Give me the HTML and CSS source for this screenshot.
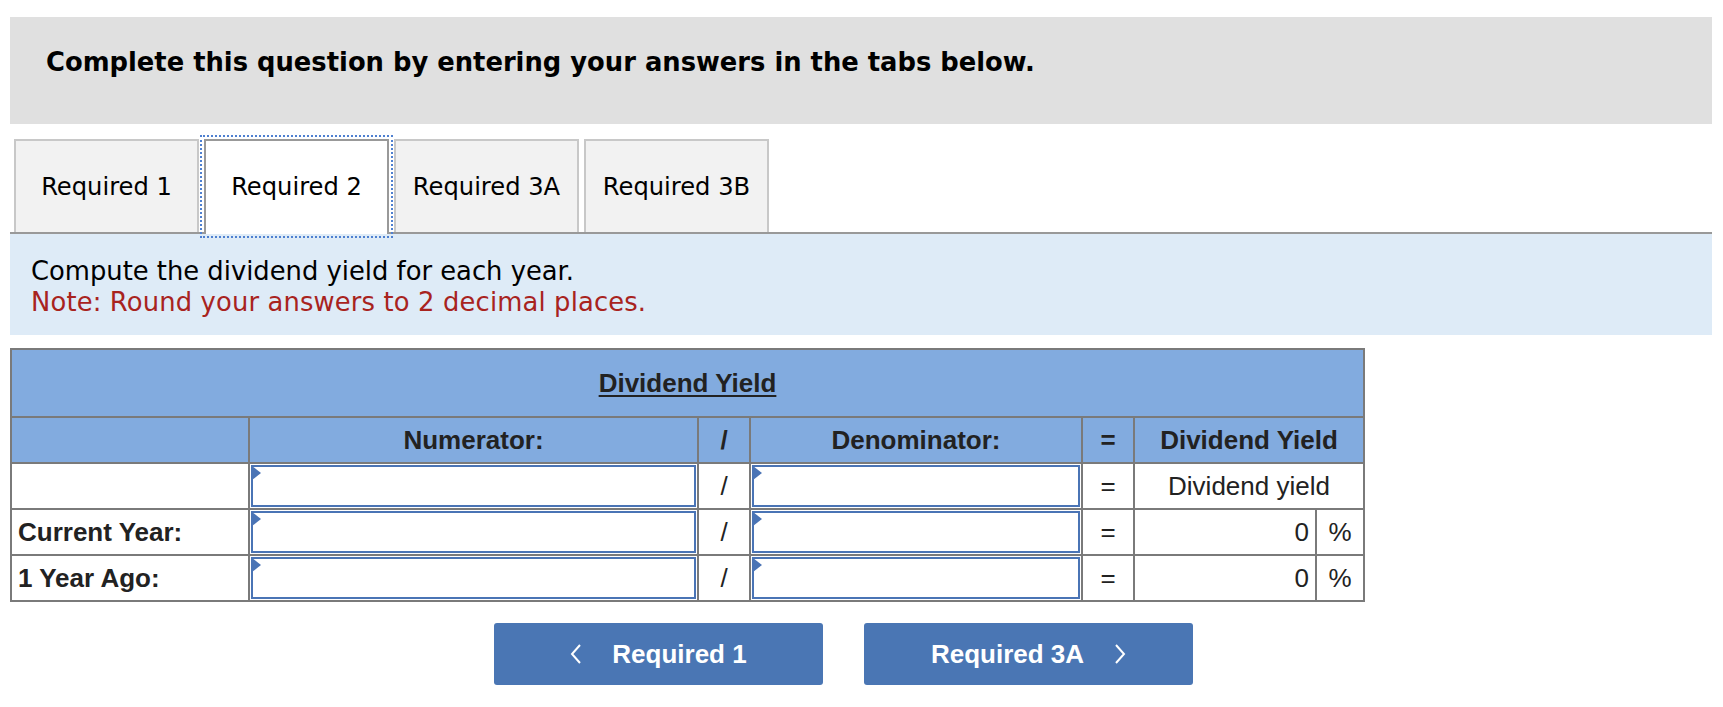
FILE: index.html
```html
<!DOCTYPE html>
<html lang="en">
<head>
<meta charset="utf-8">
<title>Dividend Yield</title>
<link rel="stylesheet" href="styles.css">
</head>
<body>
<div class="page">
  <div class="banner">Complete this question by entering your answers in the tabs below.</div>

  <div class="tabs">
    <div class="tab">Required 1</div>
    <div class="tab active">Required 2</div>
    <div class="tab">Required 3A</div>
    <div class="tab">Required 3B</div>
  </div>

  <div class="info">
    <div class="info-line">Compute the dividend yield for each year.</div>
    <div class="info-line note">Note: Round your answers to 2 decimal places.</div>
  </div>

  <table class="grid">
    <colgroup>
      <col class="c-label">
      <col class="c-num">
      <col class="c-op">
      <col class="c-den">
      <col class="c-op">
      <col class="c-val">
      <col class="c-pct">
    </colgroup>
    <tr class="head1">
      <th colspan="7"><span class="title">Dividend Yield</span></th>
    </tr>
    <tr class="head2">
      <th></th>
      <th>Numerator:</th>
      <th>/</th>
      <th>Denominator:</th>
      <th>=</th>
      <th colspan="2">Dividend Yield</th>
    </tr>
    <tr class="row">
      <td class="label"></td>
      <td class="inp"><div class="box"><span class="tri"></span></div></td>
      <td class="op">/</td>
      <td class="inp"><div class="box"><span class="tri"></span></div></td>
      <td class="op">=</td>
      <td colspan="2" class="center">Dividend yield</td>
    </tr>
    <tr class="row">
      <td class="label">Current Year:</td>
      <td class="inp"><div class="box"><span class="tri"></span></div></td>
      <td class="op">/</td>
      <td class="inp"><div class="box"><span class="tri"></span></div></td>
      <td class="op">=</td>
      <td class="val">0</td>
      <td class="pct">%</td>
    </tr>
    <tr class="row">
      <td class="label">1 Year Ago:</td>
      <td class="inp"><div class="box"><span class="tri"></span></div></td>
      <td class="op">/</td>
      <td class="inp"><div class="box"><span class="tri"></span></div></td>
      <td class="op">=</td>
      <td class="val">0</td>
      <td class="pct">%</td>
    </tr>
  </table>

  <div class="nav">
    <button class="btn prev">
      <svg class="chev" width="12" height="24" viewBox="0 0 12 24"><polyline points="10,3 2,12 10,21" fill="none" stroke="#fff" stroke-width="2"/></svg>
      <span>Required 1</span>
    </button>
    <button class="btn next">
      <span>Required 3A</span>
      <svg class="chev" width="12" height="24" viewBox="0 0 12 24"><polyline points="2,3 10,12 2,21" fill="none" stroke="#fff" stroke-width="2"/></svg>
    </button>
  </div>
</div>
</body>
</html>
```

FILE: styles.css
```css
html, body {
  margin: 0;
  padding: 0;
  background: #fff;
}
.page {
  padding: 17px 11px 0 10px;
}
.banner {
  background: #e0e0e0;
  height: 107px;
  box-sizing: border-box;
  padding: 30px 0 0 36px;
  font-family: "DejaVu Sans", Verdana, sans-serif;
  font-weight: bold;
  font-size: 25.8px;
  line-height: 31px;
  color: #000;
}
.tabs {
  display: flex;
  gap: 5px;
  padding: 15px 0 0 4px;
  border-bottom: 2px solid #999;
  height: 93px;
}
.tab {
  width: 185px;
  box-sizing: border-box;
  background: #f2f2f2;
  border: 2px solid #c8c8c8;
  border-bottom: none;
  display: flex;
  align-items: center;
  justify-content: center;
  font-family: "DejaVu Sans", Verdana, sans-serif;
  font-size: 24.2px;
  color: #000;
}
.tab.active {
  background: #fff;
  border-color: #999;
  margin-bottom: -2px;
  padding-bottom: 2px;
  outline: 2px dotted #4f80d0;
  outline-offset: 2px;
  position: relative;
}
.info {
  background: #deebf7;
  padding: 22px 0 17px 21px;
  font-family: "DejaVu Sans", Verdana, sans-serif;
  font-size: 25.8px;
  line-height: 31px;
  color: #000;
}
.note {
  color: #a8231e;
  letter-spacing: 0.15px;
}
.grid {
  margin-top: 13px;
  border-collapse: collapse;
  width: 1353px;
  table-layout: fixed;
  font-family: "Liberation Sans", Arial, sans-serif;
  font-size: 26px;
  color: #222;
  border: 2px solid #777;
}
.c-label { width: 238px; }
.c-num { width: 449px; }
.c-op { width: 52px; }
.c-den { width: 332px; }
.c-val { width: 182px; }
.c-pct { width: 48px; }
.grid th, .grid td {
  border: 2px solid #7a7a7a;
  padding: 0;
}
.head1 th {
  background: #82abdf;
  height: 66px;
  text-align: center;
  font-weight: bold;
}
.title {
  text-decoration: underline;
  text-underline-offset: 3px;
}
.head2 th {
  background: #82abdf;
  height: 44px;
  text-align: center;
  font-weight: bold;
}
.row td {
  height: 44px;
  background: #fff;
}
.label {
  font-weight: bold;
  padding-left: 6px !important;
  color: #222;
}
.op {
  text-align: center;
  font-weight: normal;
}
.center {
  text-align: center;
}
.val {
  text-align: right;
  padding-right: 6px !important;
}
.pct {
  text-align: center;
}
.inp {
  position: relative;
}
.box {
  position: relative;
  margin: 1px;
  height: 38px;
  border: 2px solid #4a74b5;
  background: #fff;
}
.tri {
  position: absolute;
  left: -1px;
  top: -1px;
  width: 0;
  height: 0;
  border-top: 7px solid transparent;
  border-bottom: 7px solid transparent;
  border-left: 9px solid #4a74b5;
}
.nav {
  display: flex;
  gap: 41px;
  padding: 21px 0 0 484px;
}
.btn {
  width: 329px;
  height: 62px;
  background: #4a76b4;
  border: none;
  border-radius: 3px;
  color: #fff;
  font-family: "Liberation Sans", Arial, sans-serif;
  font-weight: bold;
  font-size: 26px;
  display: flex;
  align-items: center;
  justify-content: center;
  gap: 30px;
  padding: 0;
}
```
